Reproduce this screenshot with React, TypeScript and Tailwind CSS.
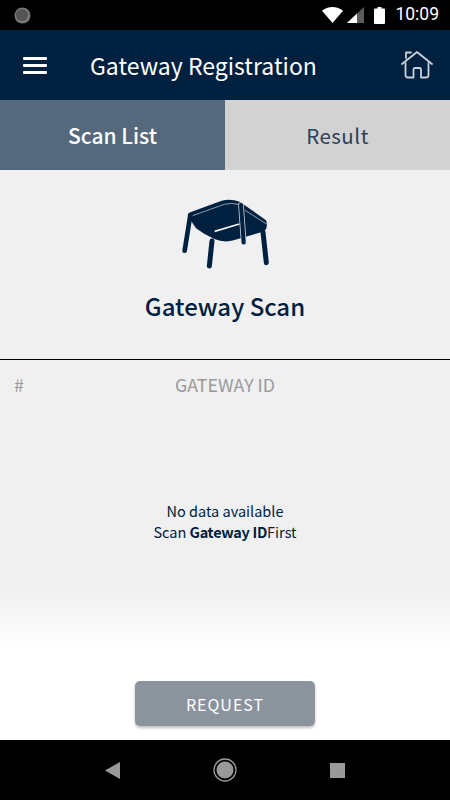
import React from "react";

const font = { cjk: "font-['Noto_Sans_CJK_KR','Noto_Sans',sans-serif]" };

function StatusBar() {
  return (
    <div className="h-[30px] bg-black flex items-center pl-[14px] pr-[11px] shrink-0">
      <svg width="17" height="17" viewBox="0 0 17 17">
        <circle cx="8.500" cy="8.500" r="8" fill="#777" />
        <path d="M14 3.500A8 8 0 0 1 3 14.500 8 8 0 0 0 14 3.500z" fill="#ddd" />
        <circle cx="8" cy="8" r="6" fill="#555" />
      </svg>
      <div className="ml-auto flex items-center">
        <svg width="21" height="16" viewBox="0 0 21 16">
          <path d="M0 3.800C2.800 1.300 6.500 0 10.500 0s7.700 1.300 10.500 3.800L10.500 16z" fill="#fff" />
        </svg>
        <svg width="17" height="16" viewBox="0 0 17 16" className="ml-[4px]">
          <path d="M0 16L17 0v16z" fill="#5c5c5c" />
          <path d="M0 16L10 6.600V16z" fill="#fff" />
        </svg>
        <svg width="11" height="17" viewBox="0 0 11 17" className="ml-[10px]">
          <path d="M3.500 0h4v1.500H10a1 1 0 0 1 1 1V16a1 1 0 0 1-1 1H1a1 1 0 0 1-1-1V2.500a1 1 0 0 1 1-1h2.500z" fill="#fff" />
        </svg>
        <span className="ml-[10px] text-[17.500px] leading-none text-white font-['Roboto',sans-serif]">10:09</span>
      </div>
    </div>
  );
}

function Header() {
  return (
    <div className="h-[70px] bg-[#00203f] flex items-center pl-[23px] pr-[17px] shrink-0">
      <div className="w-6 flex flex-col gap-[4px]">
        <div className="h-[3px] bg-white rounded-[1px]" />
        <div className="h-[3px] bg-white rounded-[1px]" />
        <div className="h-[3px] bg-white rounded-[1px]" />
      </div>
      <span className={`ml-[43px] text-[23px] leading-none text-white ${font.cjk}`}>Gateway Registration</span>
      <svg width="32" height="28" viewBox="0 0 32 28" fill="none" stroke="#c9d0d8" strokeWidth="1.800" strokeLinejoin="round" strokeLinecap="round" className="ml-auto">
        <path d="M1 13L16 1l15 12" />
        <path d="M5 7V1.500h5" />
        <path d="M4.500 12v12a2.500 2.500 0 0 0 2.500 2.500h5.500V18.500a1.500 1.500 0 0 1 1.500-1.500h4.500a1.500 1.500 0 0 1 1.500 1.500v8H25a2.500 2.500 0 0 0 2.500-2.500V12" />
      </svg>
    </div>
  );
}

function Tabs() {
  return (
    <div className={`h-[70px] flex shrink-0 ${font.cjk}`}>
      <div className="w-1/2 bg-[#56687c] flex items-center justify-center text-white text-[21px] font-medium pt-[1px]">Scan List</div>
      <div className="w-1/2 bg-[#d2d2d2] flex items-center justify-center text-[#2f4058] text-[20.500px] tracking-[0.5px]">Result</div>
    </div>
  );
}

// coordinates follow a 3x crop of the reference
function TableIcon() {
  return (
    <svg width="90" height="72" viewBox="95 50 270 216" fill="none" strokeLinecap="round">
      <path d="M112 104Q114 96 124 94L214 61Q240 54 268 64L345 118Q352 124 349 140Q347 152 335 155L250 180Q222 188 192 176Q165 165 137 144L118 115z" fill="#00203f" />
      <path d="M127 106L222 72Q245 66 264 72" stroke="#a9b5c1" strokeWidth="2.500" />
      <path d="M284 90L349 131" stroke="#a9b5c1" strokeWidth="2.500" />
      <path d="M120 104L103 211" stroke="#00203f" strokeWidth="14" />
      <path d="M185 182L177 257" stroke="#00203f" strokeWidth="15" />
      <path d="M338 156L348 247" stroke="#00203f" strokeWidth="15" />
      <path d="M272 74L280 186" stroke="#c4ccd4" strokeWidth="17" />
      <path d="M272 74L280 186" stroke="#00203f" strokeWidth="12" />
      <path d="M193 153L267 131" stroke="#f4f4f4" strokeWidth="5" strokeLinecap="butt" />
    </svg>
  );
}

function ScanHero() {
  return (
    <div className="h-[190px] flex flex-col items-center border-b border-black pt-[27px] shrink-0">
      <div className="ml-[4px]">
        <TableIcon />
      </div>
      <h1 className={`mt-[20px] text-[24px] leading-[34px] font-medium text-[#00203f] ${font.cjk}`}>Gateway Scan</h1>
    </div>
  );
}

function ScanList() {
  return (
    <div className={`flex-1 flex flex-col bg-gradient-to-b from-[#f0f0f0] from-[60%] to-white to-[76%] ${font.cjk}`}>
      <div className="relative h-[48px] flex items-center justify-center text-[17.800px] text-[#9a9a9a]">
        <span className="absolute left-[14px]">#</span>
        <span>GATEWAY ID</span>
      </div>
      <div className="mt-[92px] flex flex-col items-center text-[14.500px] leading-[21px] text-[#00203f]">
        <p>No data available</p>
        <p>
          Scan <b className="font-bold tracking-[-0.3px]">Gateway ID</b>First
        </p>
      </div>
      <div className="mt-auto pb-[14px] flex justify-center">
        <button className="w-[180px] h-[45px] bg-[#8b939d] rounded-[5px] text-white text-[16px] tracking-[1px] shadow-[0_2px_3px_rgba(0,0,0,0.25)]">
          REQUEST
        </button>
      </div>
    </div>
  );
}

function NavBar() {
  return (
    <div className="h-[60px] bg-black flex items-center justify-center shrink-0">
      <svg width="15" height="17" viewBox="0 0 15 17" className="mr-[93px]">
        <path d="M15 0v17L0 8.500z" fill="#999" />
      </svg>
      <svg width="24" height="24" viewBox="0 0 24 24">
        <circle cx="12" cy="12" r="11" fill="none" stroke="#999" strokeWidth="1.300" />
        <circle cx="12" cy="12" r="8.500" fill="#999" />
      </svg>
      <div className="ml-[93px] w-[15px] h-[15px] bg-[#999]" />
    </div>
  );
}

export default function App() {
  return (
    <div className="w-[450px] h-[800px] flex flex-col bg-[#f0f0f0] overflow-hidden">
      <StatusBar />
      <Header />
      <Tabs />
      <ScanHero />
      <ScanList />
      <NavBar />
    </div>
  );
}
